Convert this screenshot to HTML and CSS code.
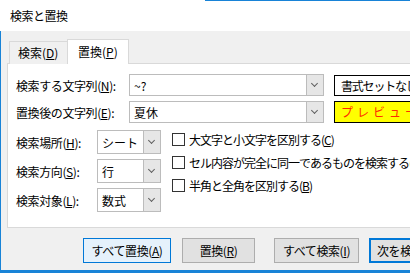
FILE: index.html
```html
<!DOCTYPE html>
<html lang="ja">
<head>
    <meta charset="UTF-8">
    <title>検索と置換</title>
    <link rel="stylesheet" href="styles.css">
</head>
<body>
    <div class="window">
        <div class="titlebar">検索と置換</div>
        <div class="content">
            <div class="tabs">
                <div class="tab">検索(<u>D</u>)</div>
                <div class="tab active">置換(<u>P</u>)</div>
            </div>
            <div class="panel">
                <div class="textRow">
                    <label class="textLabel">検索する文字列(<u>N</u>):</label>
                    <div class="combo"><span class="comboText">~?</span><span class="arrow"></span></div>
                    <div class="formatBox">書式セットなし</div>
                </div>
                <div class="textRow">
                    <label class="textLabel">置換後の文字列(<u>E</u>):</label>
                    <div class="combo"><span class="comboText">夏休</span><span class="arrow"></span></div>
                    <div class="formatBox preview">プレビュー</div>
                </div>
                <div class="options">
                    <div class="selects">
                        <div class="selectRow">
                            <label class="selectLabel">検索場所(<u>H</u>):</label>
                            <div class="select"><span class="comboText">シート</span><span class="arrow"></span></div>
                        </div>
                        <div class="selectRow">
                            <label class="selectLabel">検索方向(<u>S</u>):</label>
                            <div class="select"><span class="comboText">行</span><span class="arrow"></span></div>
                        </div>
                        <div class="selectRow">
                            <label class="selectLabel">検索対象(<u>L</u>):</label>
                            <div class="select"><span class="comboText">数式</span><span class="arrow"></span></div>
                        </div>
                    </div>
                    <div class="checks">
                        <div class="check"><span class="box"></span>大文字と小文字を区別する(<u>C</u>)</div>
                        <div class="check"><span class="box"></span>セル内容が完全に同一であるものを検索する(<u>O</u>)</div>
                        <div class="check"><span class="box"></span>半角と全角を区別する(<u>B</u>)</div>
                    </div>
                </div>
            </div>
            <div class="buttons">
                <button class="btn focused">すべて置換(<u>A</u>)</button>
                <button class="btn replace">置換(<u>R</u>)</button>
                <button class="btn findAll">すべて検索(<u>I</u>)</button>
                <button class="btn next">次を検索(<u>F</u>)</button>
            </div>
        </div>
    </div>
</body>
</html>
```

FILE: styles.css
```css
* {
    margin: 0;
    padding: 0;
    box-sizing: border-box;
}

body {
    width: 410px;
    height: 273px;
    overflow: hidden;
    background: #f0f0f0;
    font-family: "Noto Sans CJK JP", "Liberation Sans", sans-serif;
    font-size: 12px;
    color: #000;
}

u {
    text-decoration: underline;
    text-underline-offset: 1px;
}

.window {
    position: relative;
    width: 410px;
    height: 273px;
    display: flex;
    flex-direction: column;
    border-bottom: 3px solid #1883d7;
}

.window::before {
    content: "";
    position: absolute;
    top: 0;
    left: 205px;
    right: 0;
    height: 1px;
    background: #1883d7;
}

.titlebar {
    height: 31px;
    background: #fff;
    padding-left: 10px;
    line-height: 31px;
    letter-spacing: -0.5px;
    flex-shrink: 0;
}

.content {
    flex: 1;
    border-left: 1px solid #1883d7;
    padding: 8px 0 0 6px;
    overflow: hidden;
}

.tabs {
    display: flex;
    align-items: flex-end;
    padding-left: 2px;
    margin-bottom: -1px;
    position: relative;
    z-index: 1;
}

.tab {
    height: 23px;
    line-height: 22px;
    padding: 0 7px 0 8px;
    width: 58px;
    border: 1px solid #d9d9d9;
    border-bottom: none;
    border-right: none;
    background: #f0f0f0;
    white-space: nowrap;
}

.tab.active {
    height: 25px;
    width: 62px;
    padding-left: 10px;
    background: #fff;
    border-right: 1px solid #d9d9d9;
    line-height: 24px;
}

.panel {
    width: 420px;
    height: 165px;
    background: #fff;
    border: 1px solid #d9d9d9;
    padding: 10px 0 0 8px;
}

.textRow {
    display: flex;
    align-items: center;
    height: 22px;
    margin-bottom: 5px;
    white-space: nowrap;
}

.textLabel {
    width: 113px;
    letter-spacing: -0.4px;
}

.combo {
    width: 195px;
    height: 22px;
    border: 1px solid #bcbcbc;
    display: flex;
    align-items: center;
    margin-right: 10px;
}

.comboText {
    flex: 1;
    padding-left: 4px;
}

.arrow {
    width: 17px;
    height: 100%;
    background: #e6e6e6;
    border-left: 1px solid #bcbcbc;
    position: relative;
}

.arrow::after {
    content: "";
    position: absolute;
    left: 5px;
    top: 6px;
    width: 4px;
    height: 4px;
    border-right: 1px solid #606060;
    border-bottom: 1px solid #606060;
    transform: rotate(45deg);
}

.select .arrow::after {
    top: 7px;
}

.formatBox {
    width: 90px;
    height: 21px;
    border: 1px solid #000;
    padding-left: 6px;
    line-height: 19px;
    background: #fff;
    overflow: hidden;
    letter-spacing: -1.2px;
}

.formatBox.preview {
    height: 22px;
    line-height: 20px;
    background: #ffff00;
    color: #ff2a00;
    letter-spacing: 4px;
}

.options {
    display: flex;
    margin-top: 7px;
    white-space: nowrap;
}

.selects {
    display: flex;
    flex-direction: column;
    gap: 5px;
}

.selectRow {
    display: flex;
    align-items: center;
}

.selectLabel {
    width: 81px;
    letter-spacing: -0.4px;
}

.select {
    width: 64px;
    height: 24px;
    border: 1px solid #bcbcbc;
    display: flex;
    align-items: center;
}

.checks {
    margin: -2px 0 0 11px;
    letter-spacing: -1px;
}

.check {
    height: 23px;
    display: flex;
    align-items: center;
}

.box {
    width: 13px;
    height: 13px;
    border: 1px solid #333;
    background: #fff;
    margin-right: 4px;
    flex-shrink: 0;
}

.buttons {
    display: flex;
    margin: 10px 0 0 76px;
}

.btn {
    height: 25px;
    font-family: inherit;
    font-size: 12px;
    color: #000;
    background: #e1e1e1;
    border: 1px solid #adadad;
    white-space: nowrap;
    letter-spacing: -0.4px;
    flex-shrink: 0;
}

.btn.focused {
    width: 88px;
    background: #e5f1fb;
    border-color: #0078d7;
}

.btn.replace {
    width: 73px;
    margin-left: 11px;
}

.btn.findAll {
    width: 85px;
    margin-left: 19px;
}

.btn.next {
    width: 88px;
    margin-left: 10px;
    border: 2px solid #0078d7;
    text-align: left;
    padding-left: 6px;
}
```
